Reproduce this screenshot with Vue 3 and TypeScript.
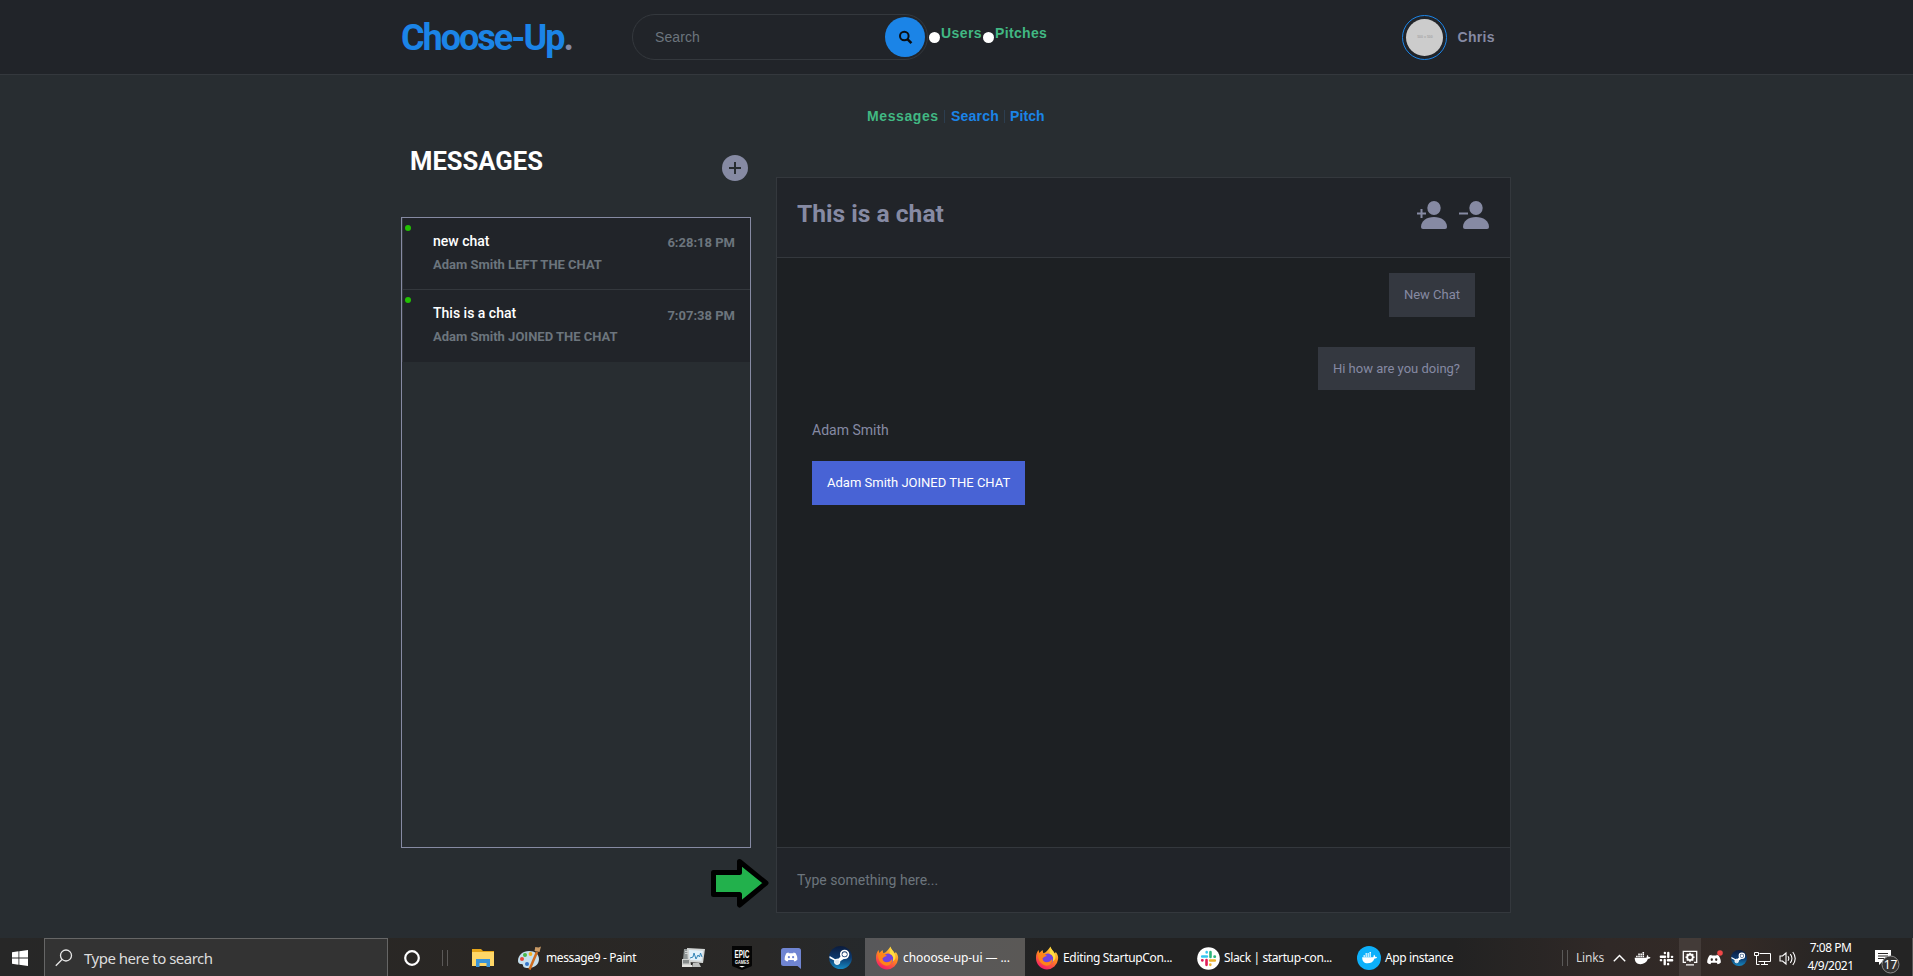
<script setup lang="ts">
interface Conversation {
  title: string
  preview: string
  time: string
}

const conversations: Conversation[] = [
  { title: 'new chat', preview: 'Adam Smith LEFT THE CHAT', time: '6:28:18 PM' },
  { title: 'This is a chat', preview: 'Adam Smith JOINED THE CHAT', time: '7:07:38 PM' },
]
</script>

<template>
  <div class="screen">
    <header class="topbar">
      <div class="logo">Choose-Up<span>.</span></div>
      <form class="search" @submit.prevent>
        <span class="search-hint">Search</span>
        <button class="search-btn" type="submit" aria-label="Search">
          <svg width="15" height="15" viewBox="0 0 15 15" fill="none" stroke="#0b0d10">
            <circle cx="6.3" cy="6" r="4.3" stroke-width="2" />
            <path d="M9.4 9.2l4 4" stroke-width="2.5" />
          </svg>
        </button>
      </form>
      <div class="filters">
        <i class="radio"></i><b class="f-users">Users</b>
        <i class="radio"></i><b class="f-pitches">Pitches</b>
      </div>
      <div class="profile">
        <div class="ring"><div class="avatar">500 x 500</div></div>
        <b>Chris</b>
      </div>
    </header>

    <nav class="nav">
      <a class="active">Messages</a><i></i><a class="n-search">Search</a><i></i><a class="n-pitch">Pitch</a>
    </nav>

    <main class="content">
      <section class="side">
        <div class="side-head">
          <h1>MESSAGES</h1>
          <svg width="26" height="26" viewBox="0 0 26 26">
            <circle cx="13" cy="13" r="13" fill="#868aa3" />
            <path d="M13 7v12M7 13h12" stroke="#282d31" stroke-width="2" />
          </svg>
        </div>
        <div class="list">
          <div v-for="c in conversations" :key="c.title" class="item">
            <i class="dot"></i>
            <div class="item-text">
              <div class="item-title">{{ c.title }}</div>
              <div class="item-preview">{{ c.preview }}</div>
            </div>
            <div class="item-time">{{ c.time }}</div>
          </div>
        </div>
      </section>

      <section class="chat">
        <div class="chat-head">
          <h2>This is a chat</h2>
          <div class="chat-actions">
            <svg width="30" height="28" viewBox="0 0 30 28" fill="#868aa3">
              <ellipse cx="17" cy="7" rx="6.7" ry="7" />
              <path d="M4 26c0-6 5.500-10 13-10s13 4 13 10q0 2-2 2H6q-2 0-2-2z" />
              <path d="M4.500 8v9M0 12.500h9" stroke="#868aa3" stroke-width="2" />
            </svg>
            <svg width="30" height="28" viewBox="0 0 30 28" fill="#868aa3">
              <ellipse cx="17" cy="7" rx="6.700" ry="7" />
              <path d="M4 26c0-6 5.500-10 13-10s13 4 13 10q0 2-2 2H6q-2 0-2-2z" />
              <path d="M0 12.500h9" stroke="#868aa3" stroke-width="2" />
            </svg>
          </div>
        </div>
        <div class="thread">
          <div class="bubble mine first">New Chat</div>
          <div class="bubble mine second">Hi how are you doing?</div>
          <div class="sender">Adam Smith</div>
          <div class="bubble theirs">Adam Smith JOINED THE CHAT</div>
        </div>
        <div class="composer">Type something here...</div>
      </section>
    </main>

    <svg class="pointer" width="60" height="50" viewBox="0 0 60 50">
      <path d="M3.500 14.500H29.500V3.500L56 25L29.500 47V36.500H3.500z" fill="#22b14c" stroke="#000" stroke-width="5" stroke-linejoin="round" />
    </svg>

    <!-- shared taskbar glyphs -->
    <svg class="defs" width="0" height="0">
      <defs>
        <linearGradient id="fire" x1="0.8" y1="0" x2="0.3" y2="1">
          <stop offset="0" stop-color="#ffe84a" /><stop offset="0.45" stop-color="#ff8a1e" /><stop offset="1" stop-color="#f5156c" />
        </linearGradient>
        <linearGradient id="steamfill" x1="0" y1="0" x2="0" y2="1">
          <stop offset="0" stop-color="#0b1b3c" /><stop offset="0.500" stop-color="#0d386c" /><stop offset="1" stop-color="#1588c2" />
        </linearGradient>
        <symbol id="firefox" viewBox="0 0 24 24">
          <path d="M12 23.500A11.300 11.300 0 0 1 1 12C1 8 2 6 3.600 4l.6 3L7.500 4l.8 3.300C11 7 13 4 15.500.5c.4 3 3 4 4.300 7l1-1.500C23 9 23.500 11 23 13.500A11.300 11.300 0 0 1 12 23.500z" fill="url(#fire)" />
          <circle cx="13" cy="13" r="5.400" fill="#7143e0" />
          <path d="M3 8c4-2 7 0 9 2-3 .2-3 2-5 2 1 6 8 5 10 1 1 5-4 8-8 6S3 14 3 8z" fill="#ff8418" />
          <path d="M15.500.8c.4 4-1.500 5.200-.5 7.200 3 1 4 4 2.500 7.500C21 14 21 10 19.500 7.500 18 5 16 3.500 15.500.8z" fill="#ffdc40" />
        </symbol>
        <symbol id="slack" viewBox="0 0 24 24">
          <g fill="none" stroke-width="3.300" stroke-linecap="round">
            <g class="s-blue"><path d="M4 9.500h6M9.700 4v.4" /></g>
            <g class="s-green"><path d="M14.500 4v6M20 9.700H19.600" /></g>
            <g class="s-yellow"><path d="M20 14.500h-6M14.300 20v-.4" /></g>
            <g class="s-red"><path d="M9.500 20v-6M4 14.300h.4" /></g>
          </g>
        </symbol>
        <symbol id="whale" viewBox="0 0 24 18">
          <path d="M1 8h15.500c1.300 0 1.800-1 1.500-2.500l1-1.500c1.200 1 1.500 2 1.300 3 1 0 2 0 3 .7-.7 1.500-2 2-3.700 2C18 14.500 14 17 9 17 4 17 1 14 1 8z" />
          <path d="M3 5h2.200v2.300H3zM6 5h2.200v2.300H6zM9 5h2.200v2.300H9zM12 5h2.200v2.300H12zM6 2h2.200v2.300H6zM9 2h2.200v2.300H9zM12 2h2.200v2.300H12zM12-.5h2.200v2H12z" />
        </symbol>
        <symbol id="steam" viewBox="0 0 24 24">
          <circle cx="12" cy="12" r="12" fill="url(#steamfill)" />
          <path d="M.5 12.500L8 16.500l2 .5 7-4.500-2.500-4L10 13l-3 1L.7 10.500z" fill="#fff" />
          <circle cx="16.300" cy="8.700" r="4" fill="#12366a" stroke="#fff" stroke-width="1.800" />
          <circle cx="16.300" cy="8.700" r="2.300" fill="#fff" />
          <circle cx="8.500" cy="16.500" r="2.800" fill="#dfe8f0" stroke="#fff" stroke-width="1" />
        </symbol>
        <symbol id="pad" viewBox="0 0 24 18">
          <path fill-rule="evenodd" d="M8 1L7.500 2.300h9L16 1l4 1c2.500 4 4 8 3.700 12-2 1.700-3.500 2.500-5.500 3l-1.500-2.500H7.300L5.800 17C3.500 16.500 2 15.700.3 14 .2 10 1.500 6 4 2zM8.200 7a2 2.200 0 1 0 .01 4.400A2 2.200 0 1 0 8.200 7zM15.800 7a2 2.200 0 1 0 .01 4.400A2 2.200 0 1 0 15.800 7z" />
        </symbol>
      </defs>
    </svg>

    <footer class="taskbar">
      <div class="slot start">
        <svg width="16" height="16" viewBox="0 0 16 16" fill="#fff"><path d="M0 2.200L6.500 1.300V7.500H0zM7.300 1.200L16 0V7.500H7.300zM0 8.400H6.500V14.700L0 13.800zM7.300 8.400H16V16L7.300 14.800z" /></svg>
      </div>
      <div class="os-search">
        <svg width="18" height="18" viewBox="0 0 18 18" fill="none" stroke="#e8e8e8" stroke-width="1.300"><circle cx="11" cy="6.500" r="5.500" /><path d="M7 10.500L.8 16.700" /></svg>
        <span>Type here to search</span>
      </div>
      <div class="slot w48"><svg width="18" height="18" viewBox="0 0 18 18"><circle cx="9" cy="9" r="6.800" fill="none" stroke="#fff" stroke-width="2.200" /></svg></div>
      <div class="grip left"></div>
      <div class="slot w48">
        <svg width="22" height="20" viewBox="0 0 22 20"><path d="M0 1h9l2 2h11v15H0z" fill="#e6a519" /><path d="M0 4h22v14H0z" fill="#ffd767" /><path d="M4 19v-8h14v8h-3.500v-4h-7v4z" fill="#3b95d9" /></svg>
      </div>
      <div class="task paint">
        <svg width="24" height="24" viewBox="0 0 24 24">
          <path d="M1 15C1 9 6 5 12 5c6 0 10 3 10 8 0 6-5 9-11 9-4 0-5-1-5-3 0-1.500-5 0-5-4z" fill="#c5dfed" />
          <circle cx="5" cy="13" r="2" fill="#e74638" /><circle cx="8" cy="9" r="2" fill="#49b749" /><circle cx="13.500" cy="8" r="1.900" fill="#f3ae22" /><circle cx="10" cy="18" r="2" fill="#3374c8" />
          <path d="M12.500 23.500L20 6" stroke="#ce6d20" stroke-width="2.500" /><path d="M17.500 5l.8-4 3.200.5L24 .5 22.500 6z" fill="#c99a65" />
        </svg>
        <span class="t-paint">message9 - Paint</span>
      </div>
      <div class="slot w49">
        <svg width="24" height="22" viewBox="0 0 24 22"><path d="M3 2h9v11H2z" fill="#8f9595" /><path d="M4 4h4v1H4zM4 6h4v1H4z" fill="#cfd2d2" /><path d="M6 1l18 1-2 14-15-1z" fill="#d3d6d5" /><path d="M8 3l14 .8-1.500 10L8.500 13z" fill="#e2f1fa" /><path d="M9 11l3-1 1-4 2 6 2-4 1.500 2 1-4 1.500 4" fill="none" stroke="#3485b7" /><path d="M1 12h8l1 6H1z" fill="#d0d2d0" /><path d="M2 13h6v3.500H2z" fill="#868b8b" /><path d="M12 16h6l2 4h-9z" fill="#bdbfbd" /><path d="M1 18h10v2H1z" fill="#e3e3e0" /></svg>
      </div>
      <div class="slot w49">
        <svg width="22" height="24" viewBox="0 0 22 24"><path d="M1 0h20v19q0 1-1 1.500L11 24 2 20.500Q1 20 1 19z" fill="#050505" /><text class="epic" x="11" y="12" textLength="15" lengthAdjust="spacingAndGlyphs">EPIC</text><text class="games" x="11" y="18" textLength="14" lengthAdjust="spacingAndGlyphs">GAMES</text><path d="M8 20h6l-3 1.500z" fill="#fff" /></svg>
      </div>
      <div class="slot w49">
        <svg width="20" height="22" viewBox="0 0 20 22"><path d="M2.500 1h15Q20 1 20 3.500V22l-3.500-3h-14Q0 19 0 16.500v-13Q0 1 2.500 1z" fill="#7085d2" /><use href="#pad" x="3.300" y="5" width="13.400" height="10" fill="#fff" /></svg>
      </div>
      <div class="slot w50 raise"><svg width="23" height="23"><use href="#steam" width="23" height="23" /></svg></div>
      <div class="task active-task">
        <svg width="24" height="24"><use href="#firefox" width="24" height="24" /></svg>
        <span class="t-ui">chooose-up-ui — ...</span>
      </div>
      <div class="task wide">
        <svg width="24" height="24"><use href="#firefox" width="24" height="24" /></svg>
        <span class="t-edit">Editing StartupCon...</span>
      </div>
      <div class="task wide slack-task">
        <svg width="23" height="23" class="colored"><circle cx="11.500" cy="11.500" r="11.300" fill="#fff" /><use href="#slack" x="2" y="2" width="19" height="19" /></svg>
        <span class="t-slack">Slack | startup-con...</span>
      </div>
      <div class="task">
        <svg width="24" height="24"><circle cx="12" cy="12" r="12" fill="#0db0fa" /><use href="#whale" x="4" y="6" width="17" height="12" fill="#fff" /></svg>
        <span class="t-app">App instance</span>
      </div>

      <div class="tray">
        <div class="grip"></div>
        <div class="links">Links</div>
        <div class="slot w24"><svg width="13" height="8" viewBox="0 0 13 8"><path d="M.8 7.200L6.500 1.500l5.700 5.700" fill="none" stroke="#fff" stroke-width="1.400" /></svg></div>
        <div class="slot w23"><svg width="17" height="13"><use href="#whale" width="17" height="13" fill="#fff" /></svg></div>
        <div class="slot w25"><svg width="17" height="17" class="mono"><use href="#slack" width="17" height="17" /></svg></div>
        <div class="slot w22 lit"><svg width="16" height="16" viewBox="0 0 16 16" fill="none" stroke="#fff"><path d="M4 12.300H1.300V1.300h13.400v11H12M4 14.800h8" stroke-width="1.300" /><circle cx="8" cy="7.300" r="2.800" stroke-width="1.800" /><path d="M8 2.800v2M8 9.800v2M3.500 7.300h2M10.500 7.300h2M4.800 4.100l1.400 1.400M9.800 9.100l1.400 1.400M11.200 4.100L9.800 5.500M6.200 9.100l-1.400 1.400" stroke-width="1.500" /></svg></div>
        <div class="slot w26"><svg width="17" height="16" viewBox="0 0 17 16"><use href="#pad" x="1" y="4" width="14" height="11" fill="#fff" /><circle cx="14" cy="3" r="2.800" fill="#f04747" /></svg></div>
        <div class="slot w23"><svg width="16" height="16"><use href="#steam" width="16" height="16" /></svg></div>
        <div class="slot w25"><svg width="17" height="15" viewBox="0 0 17 15" fill="none" stroke="#fff" stroke-width="1"><path d="M5.500 2.500h11v8h-12M10.500 10.500v3M7 13.500h7M.5 1.500h4v3h-4zM2.500 4.500v9h3" /></svg></div>
        <div class="slot w26"><svg width="18" height="15" viewBox="0 0 18 15" fill="none" stroke="#fff" stroke-width="1.100"><path d="M1 5h2.500L7 2v11L3.500 10H1zM9 5.300q1.600 2.200 0 4.400M11.300 3.200q3.300 4.300 0 8.600M13.800 1q4.800 6.500 0 13" /></svg></div>
        <div class="clock"><span class="c-time">7:08 PM</span><span class="c-date">4/9/2021</span></div>
        <div class="notif">
          <svg width="28" height="28" viewBox="0 0 28 28"><path d="M1 3h16v12h-9l-3 3v-3H1z" fill="#fff" /><path d="M4 6.500h10M4 9h10M4 11.500h6" stroke="#292727" /><circle cx="16.500" cy="17.500" r="8.500" fill="#343332" stroke="#8b8b8b" /><text class="badge" x="16.500" y="21.700">17</text></svg>
        </div>
      </div>
    </footer>
  </div>
</template>

<style>
html, body { margin: 0; overflow: hidden; background: #282d31; }
</style>

<style scoped>
* { box-sizing: border-box; }
.screen { position: relative; width: 1913px; height: 976px; overflow: hidden; display: flex; flex-direction: column; background: #282d31; font-family: Roboto, "Liberation Sans", sans-serif; color: #868aa3; }
h1, h2 { margin: 0; }

.topbar { height: 75px; flex: none; display: flex; align-items: flex-start; background: #212429; border-bottom: 1px solid #34383d; padding-left: 401px; font-family: "Liberation Sans", Arial, sans-serif; }
.logo { width: 231px; padding-top: 17px; font: 700 36px/42px Roboto, sans-serif; letter-spacing: -2px; color: #1b84e7; white-space: nowrap; }
.logo span { color: #868aa3; }
.search { width: 296px; height: 46px; margin-top: 14px; border: 1px solid #34383d; border-radius: 23px; display: flex; align-items: center; justify-content: space-between; padding: 0 2px 0 22px; }
.search-hint { font-size: 14px; letter-spacing: .1px; color: #6c757d; }
.search-btn { width: 40px; height: 40px; border: 0; border-radius: 50%; background: #1b84e7; padding: 0; display: grid; place-items: center; }
.filters { display: flex; margin-left: 1px; height: 74px; font-size: 14px; line-height: 16px; color: #41b883; }
.radio { width: 11px; height: 11px; border-radius: 50%; background: #fff; margin-top: 32px; }
.filters b { margin-top: 25px; margin-left: 1px; }
.f-users { width: 42px; letter-spacing: .4px; }
.f-pitches { letter-spacing: .35px; }
.profile { margin-left: auto; margin-right: 418px; display: flex; align-items: center; gap: 10px; margin-top: 15px; font-size: 14px; letter-spacing: .35px; }
.profile b { margin-top: -2px; }
.ring { width: 45px; height: 45px; border: 1px solid #1b84e7; border-radius: 50%; display: grid; place-items: center; }
.avatar { width: 37px; height: 37px; border-radius: 50%; background: #ccc; color: #a8a8a8; font-size: 3.500px; font-weight: 700; line-height: 37px; text-align: center; letter-spacing: 0; }

.nav { height: 16px; flex: none; margin: 33px 0 0 867px; display: flex; align-items: center; font: 700 14px/16px "Liberation Sans", Arial, sans-serif; color: #1b84e7; }
.nav a { letter-spacing: .2px; }
.nav .active { color: #41b883; width: 77px; letter-spacing: .6px; }
.nav i { width: 1px; height: 13px; background: #2c3e50; margin-right: 6px; }
.nav .n-search { width: 53px; }
.nav .n-pitch { margin-left: -1px; letter-spacing: .1px; }

.content { display: flex; align-items: flex-start; padding-left: 401px; margin-top: 14px; }
.side { width: 350px; }
.side-head { height: 79px; display: flex; justify-content: space-between; padding: 9px 3px 0 9px; }
.side-head h1 { font-size: 25.6px; line-height: 29px; font-weight: 700; color: #fff; }
.side-head svg { margin-top: 8px; }
.list { height: 631px; border: 1px solid #868aa3; }
.item { position: relative; height: 72px; display: flex; justify-content: space-between; background: #212429; border-bottom: 1px solid #34383d; border-left: 1px solid #34383d; padding: 14px 15px 0 30px; }
.item:last-child { border-bottom: 0; }
.dot { position: absolute; left: 2px; top: 7px; width: 6px; height: 6px; border-radius: 50%; background: #22c003; }
.item-title { font-size: 14px; line-height: 18px; font-weight: 500; color: #fff; }
.item-preview { margin-top: 6px; font-size: 13px; line-height: 18px; font-weight: 700; color: #6c757d; }
.item-time { padding-top: 2px; font-size: 13px; line-height: 18px; font-weight: 700; color: #6c757d; }
.item:last-child .item-time { padding-top: 3px; }

.chat { width: 735px; height: 736px; margin: 39px 0 0 25px; display: flex; flex-direction: column; background: #1d2023; border: 1px solid #34383d; }
.chat-head { height: 80px; display: flex; justify-content: space-between; background: #212429; border-bottom: 1px solid #34383d; padding: 21px 21px 0 20px; }
.chat-head h2 { font-size: 24.600px; line-height: 30px; font-weight: 700; }
.chat-actions { display: flex; gap: 12px; padding-top: 2px; }
.thread { height: 589px; display: flex; flex-direction: column; align-items: flex-start; padding: 15px 35px 0; }
.bubble { height: 44px; padding: 0 15px; font-size: 13px; line-height: 43px; }
.mine { align-self: flex-end; background: #343840; }
.second { margin-top: 30px; height: 43px; }
.sender { margin-top: 30px; font-size: 14px; line-height: 20px; }
.theirs { margin-top: 21px; background: #4863d5; color: #fff; }
.composer { flex: 1; background: #212429; border-top: 1px solid #34383d; padding: 22px 20px; font-size: 14px; line-height: 20px; color: #6c757d; }
.pointer { position: absolute; left: 710px; top: 858px; }
.defs { position: absolute; }

.taskbar { position: absolute; left: 0; right: 0; bottom: 0; height: 38px; display: flex; background: linear-gradient(90deg, #272727 0, #2a2724 27%, #292827 40%, #25292c 46%, #222 55%, #222 76%, #302927 84%, #332a26 91%, #242424 97%); color: #fff; font: 12px/38px "Noto Sans", "Open Sans", sans-serif; white-space: nowrap; }
.slot { flex: none; display: grid; place-items: center; padding-top: 2px; }
.raise { padding-top: 0; }
.start { width: 44px; padding-right: 4px; }
.w22 { width: 22px; } .w23 { width: 23px; } .w24 { width: 24px; } .w25 { width: 25px; } .w26 { width: 26px; }
.w48 { width: 48px; } .w49 { width: 49px; } .w50 { width: 50px; }
.os-search { flex: none; width: 344px; border: 1px solid #666; border-bottom: 0; background: #333; padding-left: 10px; display: flex; align-items: center; gap: 11px; font-size: 15px; color: #ddd; }
.os-search span { letter-spacing: -.5px; padding-top: 1px; }
.grip { width: 20px; height: 16px; margin-top: 12px; flex: none; }
.grip::before { content: ""; display: block; width: 4px; height: 16px; margin-left: 6px; border: solid #5b5958; border-width: 0 1px; }
.grip.left { width: 23px; }
.task { flex: none; width: 160px; padding-left: 10px; display: flex; align-items: center; gap: 4px; }
.task span { padding-top: 2px; }
.task svg { margin-top: 2px; flex: none; }
.paint { width: 161px; gap: 5px; }
.wide { width: 161px; }
.slack-task { padding-left: 11px; gap: 4px; }
.active-task { background: linear-gradient(90deg, #58585a, #5a5856); }
.t-paint { letter-spacing: -.38px; }
.t-ui { letter-spacing: -.08px; }
.t-edit { letter-spacing: -.33px; }
.t-slack, .t-app { letter-spacing: -.38px; }
.epic, .games { overflow: visible; }
.epic, .games, .badge { fill: #fff; text-anchor: middle; font-family: "Liberation Sans", sans-serif; font-weight: 700; }
.epic { font-size: 11px; }
.games { font-size: 4.500px; }
.badge { font: 12px "Noto Sans", sans-serif; }
.s-blue { stroke: #36c5f0; } .s-green { stroke: #2eb67d; } .s-yellow { stroke: #ecb22e; } .s-red { stroke: #e01e5a; }
.mono { filter: grayscale(1) brightness(4); }
.lit { background: #433b38; }
.tray { margin-left: auto; width: 357px; display: flex; border-right: 1px solid #555; padding-right: 1px; }
.links { width: 31px; padding-top: 1px; color: #d5d5d5; letter-spacing: -.2px; }
.clock { width: 59px; display: flex; flex-direction: column; align-items: center; line-height: 18px; padding-top: 1px; letter-spacing: -.5px; }
.notif { width: 51px; padding: 9px 0 0 14px; line-height: 0; }
</style>
